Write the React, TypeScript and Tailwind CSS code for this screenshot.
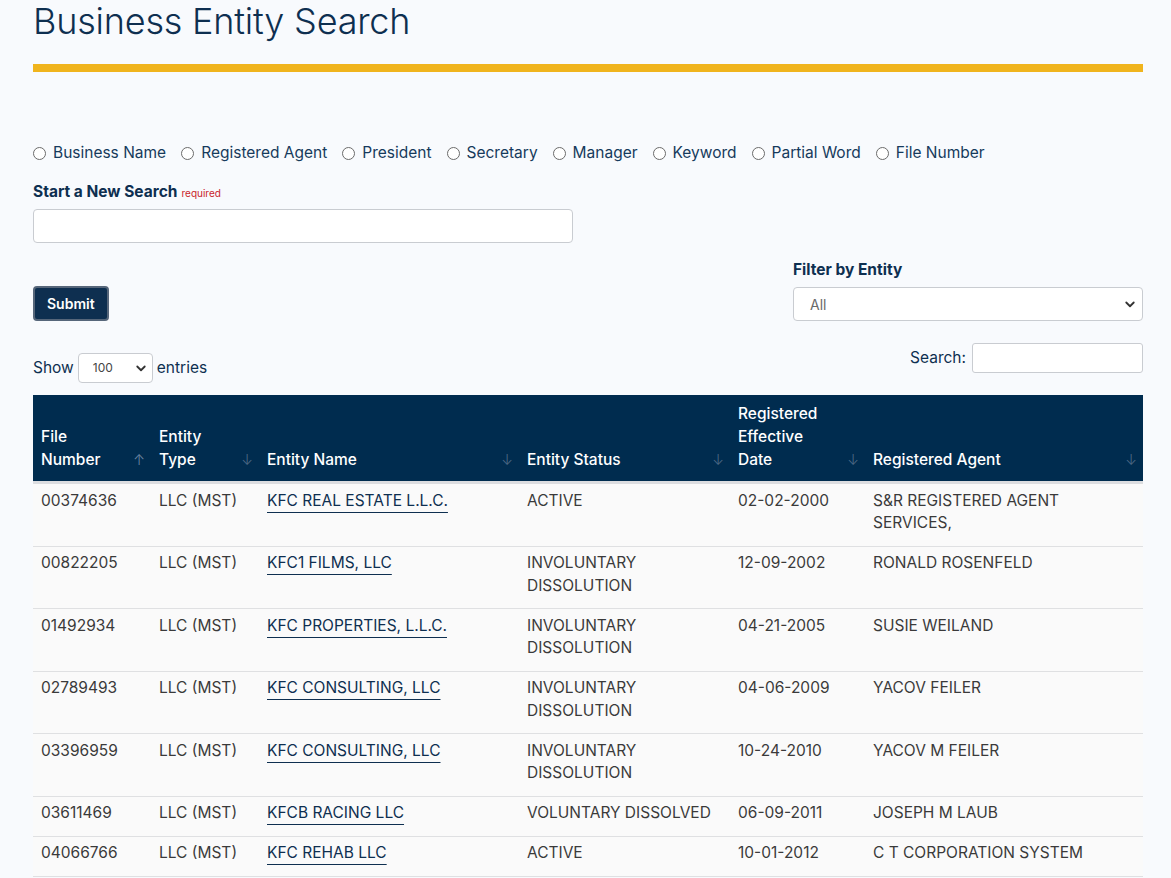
const searchTypes = [
  'Business Name',
  'Registered Agent',
  'President',
  'Secretary',
  'Manager',
  'Keyword',
  'Partial Word',
  'File Number',
];

const columns = [
  { label: ['File', 'Number'], width: 'w-[118px]', up: true },
  { label: ['Entity', 'Type'], width: 'w-[108px]' },
  { label: ['Entity Name'], width: 'w-[260px]' },
  { label: ['Entity Status'], width: 'w-[211px]' },
  { label: ['Registered', 'Effective', 'Date'], width: 'w-[135px]' },
  { label: ['Registered Agent'], width: 'w-[278px]' },
];

const rows = [
  ['00374636', 'LLC (MST)', 'KFC REAL ESTATE L.L.C.', 'ACTIVE', '02-02-2000', 'S&R REGISTERED AGENT SERVICES,'],
  ['00822205', 'LLC (MST)', 'KFC1 FILMS, LLC', 'INVOLUNTARY DISSOLUTION', '12-09-2002', 'RONALD ROSENFELD'],
  ['01492934', 'LLC (MST)', 'KFC PROPERTIES, L.L.C.', 'INVOLUNTARY DISSOLUTION', '04-21-2005', 'SUSIE WEILAND'],
  ['02789493', 'LLC (MST)', 'KFC CONSULTING, LLC', 'INVOLUNTARY DISSOLUTION', '04-06-2009', 'YACOV FEILER'],
  ['03396959', 'LLC (MST)', 'KFC CONSULTING, LLC', 'INVOLUNTARY DISSOLUTION', '10-24-2010', 'YACOV M FEILER'],
  ['03611469', 'LLC (MST)', 'KFCB RACING LLC', 'VOLUNTARY DISSOLVED', '06-09-2011', 'JOSEPH M LAUB'],
  ['04066766', 'LLC (MST)', 'KFC REHAB LLC', 'ACTIVE', '10-01-2012', 'C T CORPORATION SYSTEM'],
];

export default function App() {
  return (
    <div className="min-h-[878px] bg-[#f8fafd] font-['Inter','Noto_Sans',sans-serif] text-[#0f2d4d]">
      <div className="ml-[33px] w-[1110px]">
        <h1 className="text-[36px] leading-[42px] font-light tracking-[-0.2px] text-[#0e2f50]">
          Business Entity Search
        </h1>
        <div className="mt-[22px] h-[8px] bg-[#f0b41d]" />

        <div className="mt-[70px] flex items-center">
          {searchTypes.map((t) => (
            <label key={t} className="mr-[15px] flex items-center text-[15.5px] leading-[22px] text-[#163a5c]">
              <span className="mr-[7px] h-[13px] w-[13px] rounded-full border border-[#6b6b6b] bg-white" />
              {t}
            </label>
          ))}
        </div>

        <div className="mt-[17px] flex items-baseline">
          <span className="text-[15.5px] leading-[22px] font-bold text-[#0e2f50]">Start a New Search</span>
          <span className="ml-[4px] text-[10px] text-[#c8242b]">required</span>
        </div>
        <div className="mt-[6px] h-[34px] w-[540px] rounded-[4px] border border-[#c9ccd1] bg-white" />

        <div className="mt-[16px] flex justify-between">
          <div className="pt-[27px]">
            <button
              type="button"
              className="h-[35px] rounded-[4px] border-2 border-[#56667a] bg-[#0e2f50] px-[12px] text-[14px] font-semibold text-white"
            >
              Submit
            </button>
          </div>
          <div className="w-[350px]">
            <div className="text-[15.5px] leading-[22px] font-bold text-[#0e2f50]">Filter by Entity</div>
            <div className="mt-[6px] flex h-[34px] items-center justify-between rounded-[4px] border border-[#c9ccd1] bg-white pr-[6px] pl-[16px] text-[14px] text-[#6a6a6a]">
              <span>All</span>
              <Chevron />
            </div>
          </div>
        </div>

        <div className="mt-[22px] flex items-start justify-between">
          <div className="mt-[10px] flex items-center text-[15.5px] text-[#0e2f50]">
            <span>Show</span>
            <div className="mx-[4px] flex h-[30px] w-[75px] items-center justify-between rounded-[4px] border border-[#c9ccd1] bg-white pr-[5px] pl-[14px] text-[12px] text-[#444]">
              <span>100</span>
              <Chevron />
            </div>
            <span>entries</span>
          </div>
          <div className="flex items-center text-[15.5px] text-[#0e2f50]">
            <span className="mr-[6px]">Search:</span>
            <div className="h-[30px] w-[171px] rounded-[3px] border border-[#c9ccd1] bg-white" />
          </div>
        </div>

        <table className="mt-[12px] w-[1110px] table-fixed border-collapse text-[15.5px] leading-[23px]">
          <thead>
            <tr className="border-b-[3px] border-[#dcdde0] bg-[#002c4f]">
              {columns.map((c, i) => (
                <th key={i} className={`${c.width} pt-[7px] pr-[6px] pb-[10px] pl-[8px] text-left align-bottom font-medium text-white`}>
                  <div className="flex items-end justify-between">
                    <div>
                      {c.label.map((l) => (
                        <div key={l}>{l}</div>
                      ))}
                    </div>
                    <span className={`text-[14px] font-light ${c.up ? 'text-[#6f88a3]' : 'text-[#4f6a86]'}`}>
                      {c.up ? '↑' : '↓'}
                    </span>
                  </div>
                </th>
              ))}
            </tr>
          </thead>
          <tbody>
            {rows.map((r) => (
              <tr key={r[0]} className="border-b border-[#dfe0e2] bg-[#fafafa] leading-[22.5px] text-[#3a3a3a]">
                {r.map((cell, j) => (
                  <td key={j} className="pt-[5.5px] pr-[4px] pb-[11px] pl-[8px] align-top">
                    {j === 2 ? (
                      <a href="#" className="text-[#0e2f50] underline decoration-[#0e2f50] decoration-1 underline-offset-[6px]">
                        {cell}
                      </a>
                    ) : (
                      cell
                    )}
                  </td>
                ))}
              </tr>
            ))}
          </tbody>
        </table>
      </div>
    </div>
  );
}

function Chevron() {
  return (
    <svg width="12" height="12" viewBox="0 0 16 16" fill="none" stroke="#333" strokeWidth="2.4" strokeLinecap="round" strokeLinejoin="round">
      <path d="M3 6l5 5 5-5" />
    </svg>
  );
}
